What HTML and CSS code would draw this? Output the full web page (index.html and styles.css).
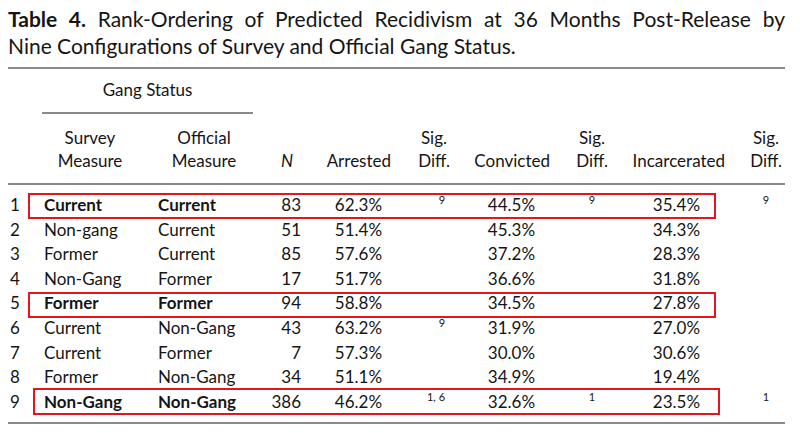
FILE: index.html
```html
<!DOCTYPE html>
<html lang="en">
<head>
<meta charset="utf-8">
<title>Table 4</title>
<link rel="stylesheet" href="styles.css">
</head>
<body>
<div class="page">
  <div class="title">
    <div class="title-l1"><b>Table 4.</b> Rank-Ordering of Predicted Recidivism at 36 Months Post-Release by</div>
    <div class="title-l2">Nine Configurations of Survey and Official Gang Status.</div>
  </div>
  <div class="table-wrap">
    <table class="data">
      <colgroup>
        <col class="c-rank"><col class="c-survey"><col class="c-official"><col class="c-n"><col class="c-arr">
        <col class="c-sig1"><col class="c-conv"><col class="c-sig2"><col class="c-inc"><col class="c-sig3">
      </colgroup>
      <thead>
        <tr class="h1">
          <th></th>
          <th colspan="2" class="gang"><div class="gang-label">Gang Status</div></th>
          <th colspan="7"></th>
        </tr>
        <tr class="h2">
          <th></th>
          <th class="hs">Survey<br>Measure</th>
          <th class="ho">Official<br>Measure</th>
          <th class="hn"><i>N</i></th>
          <th class="ha">Arrested</th>
          <th class="hsig1">Sig.<br>Diff.</th>
          <th class="hc">Convicted</th>
          <th class="hsig2">Sig.<br>Diff.</th>
          <th class="hi">Incarcerated</th>
          <th class="hsig3">Sig.<br>Diff.</th>
        </tr>
      </thead>
      <tbody>
        <tr class="strong"><td class="rk">1</td><td class="sv">Current</td><td class="of">Current</td><td class="n">83</td><td class="ar">62.3%</td><td class="s1"><span class="sup">9</span></td><td class="cv">44.5%</td><td class="s2"><span class="sup">9</span></td><td class="ic">35.4%</td><td class="s3"><span class="sup">9</span></td></tr>
        <tr><td class="rk">2</td><td class="sv">Non-gang</td><td class="of">Current</td><td class="n">51</td><td class="ar">51.4%</td><td class="s1"></td><td class="cv">45.3%</td><td class="s2"></td><td class="ic">34.3%</td><td class="s3"></td></tr>
        <tr><td class="rk">3</td><td class="sv">Former</td><td class="of">Current</td><td class="n">85</td><td class="ar">57.6%</td><td class="s1"></td><td class="cv">37.2%</td><td class="s2"></td><td class="ic">28.3%</td><td class="s3"></td></tr>
        <tr><td class="rk">4</td><td class="sv">Non-Gang</td><td class="of">Former</td><td class="n">17</td><td class="ar">51.7%</td><td class="s1"></td><td class="cv">36.6%</td><td class="s2"></td><td class="ic">31.8%</td><td class="s3"></td></tr>
        <tr class="strong"><td class="rk">5</td><td class="sv">Former</td><td class="of">Former</td><td class="n">94</td><td class="ar">58.8%</td><td class="s1"></td><td class="cv">34.5%</td><td class="s2"></td><td class="ic">27.8%</td><td class="s3"></td></tr>
        <tr><td class="rk">6</td><td class="sv">Current</td><td class="of">Non-Gang</td><td class="n">43</td><td class="ar">63.2%</td><td class="s1"><span class="sup">9</span></td><td class="cv">31.9%</td><td class="s2"></td><td class="ic">27.0%</td><td class="s3"></td></tr>
        <tr><td class="rk">7</td><td class="sv">Current</td><td class="of">Former</td><td class="n">7</td><td class="ar">57.3%</td><td class="s1"></td><td class="cv">30.0%</td><td class="s2"></td><td class="ic">30.6%</td><td class="s3"></td></tr>
        <tr><td class="rk">8</td><td class="sv">Former</td><td class="of">Non-Gang</td><td class="n">34</td><td class="ar">51.1%</td><td class="s1"></td><td class="cv">34.9%</td><td class="s2"></td><td class="ic">19.4%</td><td class="s3"></td></tr>
        <tr class="strong"><td class="rk">9</td><td class="sv">Non-Gang</td><td class="of">Non-Gang</td><td class="n">386</td><td class="ar">46.2%</td><td class="s1"><span class="sup">1, 6</span></td><td class="cv">32.6%</td><td class="s2"><span class="sup">1</span></td><td class="ic">23.5%</td><td class="s3"><span class="sup">1</span></td></tr>
      </tbody>
    </table>
    <div class="hl hl-1"></div>
    <div class="hl hl-5"></div>
    <div class="hl hl-9"></div>
  </div>
</div>
</body>
</html>
```

FILE: styles.css
```css
html, body {
  margin: 0;
  padding: 0;
  background: #ffffff;
}

body {
  font-family: Lato, "Open Sans", "Noto Sans", sans-serif;
  color: #151515;
}

.page {
  width: 777px;
  padding: 6px 0 0 8px;
}

.title {
  font-size: 21px;
  line-height: 26.5px;
}

.title-l1 {
  text-align: justify;
  text-align-last: justify;
  white-space: nowrap;
}

.title b {
  font-weight: 700;
}

.table-wrap {
  position: relative;
  margin-top: 8px;
}

.data {
  width: 777px;
  table-layout: fixed;
  border-collapse: separate;
  border-spacing: 0;
  border-top: 2px solid #8a8a8a;
  border-bottom: 2px solid #8a8a8a;
  font-size: 17px;
}

.c-rank { width: 32px; }
.c-survey { width: 114px; }
.c-official { width: 100px; }
.c-n { width: 50px; }
.c-arr { width: 88px; }
.c-sig1 { width: 68px; }
.c-conv { width: 92px; }
.c-sig2 { width: 68px; }
.c-inc { width: 108px; }
.c-sig3 { width: 57px; }

th {
  font-weight: 400;
  padding: 0;
}

.h1 th {
  line-height: 24px;
  padding-top: 9px;
  vertical-align: top;
}

.gang-label {
  margin: 0 1px 0 2px;
  padding-bottom: 10px;
  border-bottom: 2px solid #8a8a8a;
  text-align: center;
}

.h2 th {
  line-height: 23px;
  padding-top: 12px;
  padding-bottom: 11px;
  border-bottom: 2px solid #8a8a8a;
  vertical-align: bottom;
}

.hs { text-align: center; padding-right: 14px; }
.ho { text-align: center; }
.hn { text-align: right; padding-right: 11px !important; }
.ha { text-align: right; padding-right: 1px !important; }
.hsig1 { text-align: center; padding-left: 16px !important; }
.hc { text-align: right; padding-right: 2px !important; }
.hsig2 { text-align: center; padding-left: 12px !important; }
.hi { text-align: right; padding-right: 3px !important; }
.hsig3 { text-align: center; padding-left: 19px !important; }

td {
  line-height: 24.6px;
  padding: 0;
  white-space: nowrap;
  vertical-align: top;
}

tbody tr:first-child td { padding-top: 8px; }
tbody tr:last-child td { padding-bottom: 8px; }

.rk { padding-left: 2px; }
.sv { padding-left: 4px; }
.of { padding-left: 4px; }
.n { text-align: right; padding-right: 3px; }
.ar { text-align: right; padding-right: 10px; }
.s1 { text-align: right; padding-right: 15px; }
.cv { text-align: right; padding-right: 17px; }
.s2 { text-align: center; padding-left: 12px; }
.ic { text-align: right; padding-right: 28px; }
.s3 { text-align: center; padding-left: 19px; }

.strong .sv, .strong .of {
  font-weight: 700;
}

.sup {
  display: inline-block;
  font-size: 11px;
  line-height: 11px;
  vertical-align: top;
  padding-top: 1px;
}

.hl {
  position: absolute;
  border: 2px solid #e3161e;
  box-sizing: border-box;
  pointer-events: none;
}

.hl-1 { left: 20px; top: 126px; width: 688px; height: 26px; }
.hl-5 { left: 20px; top: 225px; width: 688px; height: 26px; }
.hl-9 { left: 25px; top: 321px; width: 687px; height: 27px; }
```
